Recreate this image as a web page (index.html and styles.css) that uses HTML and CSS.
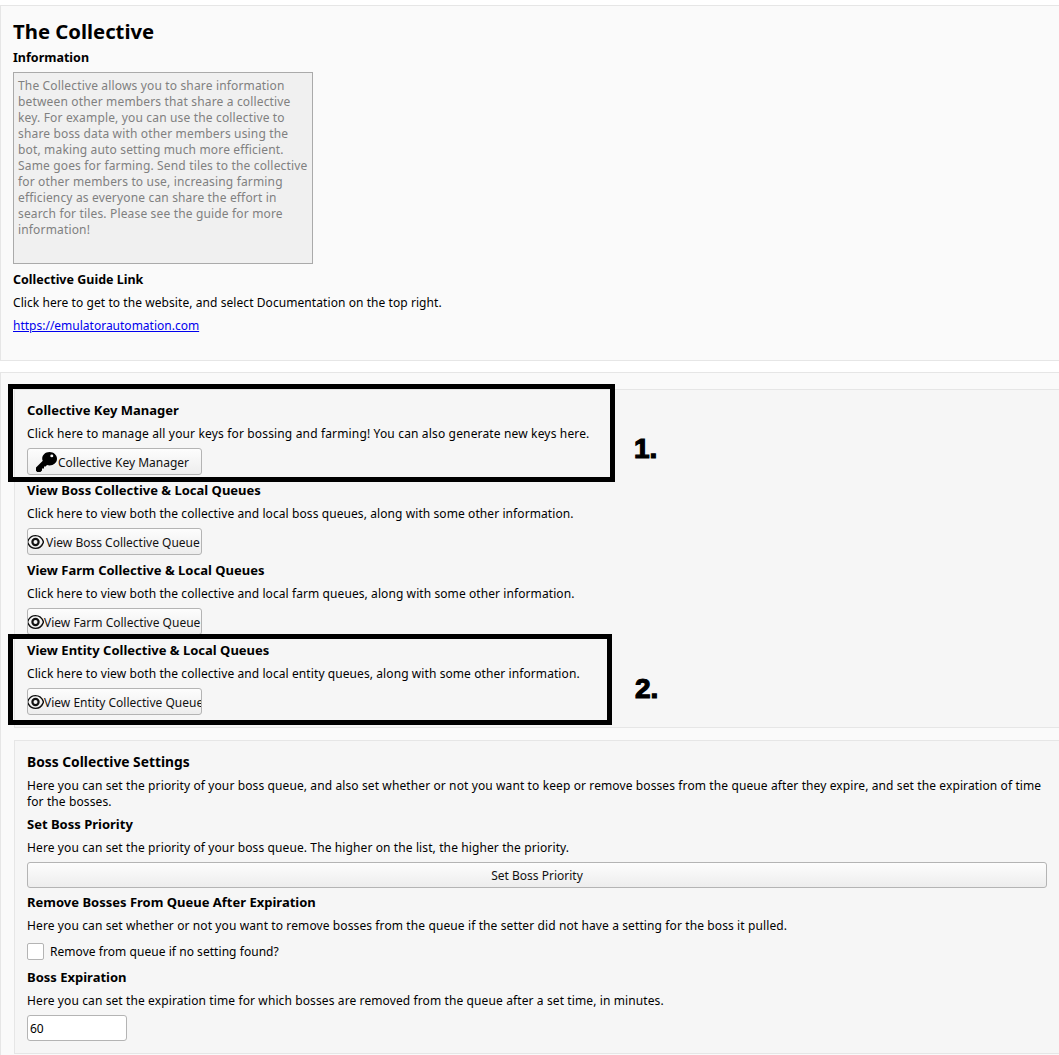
FILE: index.html
```html
<!DOCTYPE html>
<html lang="en">

<head>
    <meta charset="UTF-8">
    <title>The Collective</title>
    <link rel="stylesheet" href="styles.css">
</head>

<body>
<div class="page">
    <section class="panel intro">
        <h1>The Collective</h1>
        <h3>Information</h3>
        <textarea class="info" disabled>The Collective allows you to share information
between other members that share a collective
key. For example, you can use the collective to
share boss data with other members using the
bot, making auto setting much more efficient.
Same goes for farming. Send tiles to the collective
for other members to use, increasing farming
efficiency as everyone can share the effort in
search for tiles. Please see the guide for more
information!</textarea>
        <h3>Collective Guide Link</h3>
        <p>Click here to get to the website, and select Documentation on the top right.</p>
        <a class="link" href="#">https://emulatorautomation.com</a>
    </section>

    <section class="panel outer">
        <div class="inner queues">
            <div class="block key-block">
                <h3>Collective Key Manager</h3>
                <p>Click here to manage all your keys for bossing and farming! You can also generate new keys here.</p>
                <button class="btn key-btn">
                    <svg class="key" viewBox="0 0 21 20"><path d="M13.500 0C17.600 0 21 2.900 21 6.700 21 10.500 17.600 13.400 13.500 13.400 12.600 13.400 11.800 13.300 11 13L9.600 14.400H8V16.400H6V18.400L4.400 20H1.200L0 18.800V15.600L6.800 8.800C6.400 8.200 6.200 7.500 6.200 6.700 6.200 2.900 9.400 0 13.500 0ZM15.800 2.600A1.500 1.300 0 1 0 15.800 5.200 1.500 1.300 0 1 0 15.800 2.600Z" fill-rule="evenodd"/></svg>
                    Collective Key Manager
                </button>
            </div>
            <div class="block">
                <h3>View Boss Collective &amp; Local Queues</h3>
                <p>Click here to view both the collective and local boss queues, along with some other information.</p>
                <button class="btn eye-btn wide-eye">
                    <svg class="eye" viewBox="0 0 17 16"><path d="M.5 8C3.500 -.5 13.500 -.5 16.500 8 13.500 16.500 3.500 16.500 .5 8Z" fill="none" stroke="#111" stroke-width="1.400"/><circle cx="8.500" cy="8" r="3.100" fill="none" stroke="#111" stroke-width="2.200"/></svg>View Boss Collective Queue
                </button>
            </div>
            <div class="block">
                <h3>View Farm Collective &amp; Local Queues</h3>
                <p>Click here to view both the collective and local farm queues, along with some other information.</p>
                <button class="btn eye-btn">
                    <svg class="eye" viewBox="0 0 17 16"><path d="M.5 8C3.500 -.5 13.500 -.5 16.500 8 13.500 16.500 3.500 16.500 .5 8Z" fill="none" stroke="#111" stroke-width="1.400"/><circle cx="8.500" cy="8" r="3.100" fill="none" stroke="#111" stroke-width="2.200"/></svg>View Farm Collective Queue
                </button>
            </div>
            <div class="block">
                <h3>View Entity Collective &amp; Local Queues</h3>
                <p>Click here to view both the collective and local entity queues, along with some other information.</p>
                <button class="btn eye-btn">
                    <svg class="eye" viewBox="0 0 17 16"><path d="M.5 8C3.500 -.5 13.500 -.5 16.500 8 13.500 16.500 3.500 16.500 .5 8Z" fill="none" stroke="#111" stroke-width="1.400"/><circle cx="8.500" cy="8" r="3.100" fill="none" stroke="#111" stroke-width="2.200"/></svg>View Entity Collective Queue
                </button>
            </div>
        </div>

        <div class="inner settings">
            <h2>Boss Collective Settings</h2>
            <p>Here you can set the priority of your boss queue, and also set whether or not you want to keep or remove bosses from the queue after they expire, and set the expiration of time<br>for the bosses.</p>
            <h3>Set Boss Priority</h3>
            <p>Here you can set the priority of your boss queue. The higher on the list, the higher the priority.</p>
            <button class="btn full">Set Boss Priority</button>
            <h3>Remove Bosses From Queue After Expiration</h3>
            <p>Here you can set whether or not you want to remove bosses from the queue if the setter did not have a setting for the boss it pulled.</p>
            <label class="check"><span class="box"></span>Remove from queue if no setting found?</label>
            <h3>Boss Expiration</h3>
            <p>Here you can set the expiration time for which bosses are removed from the queue after a set time, in minutes.</p>
            <input class="num" type="text" value="60">
        </div>
    </section>
</div>

<!-- hand drawn marks over the screenshot -->
<div class="mark mark-one"></div>
<div class="mark mark-two"></div>
<div class="mark-num num-one">1.</div>
<div class="mark-num num-two">2.</div>
</body>

</html>
```

FILE: styles.css
```css
* {
    margin: 0;
    padding: 0;
    box-sizing: border-box;
}

html {
    overflow: hidden;
}

body {
    position: relative;
    height: 1055px;
    overflow: hidden;
    background: #fff;
    color: #000;
    font-family: "Noto Sans", "DejaVu Sans", sans-serif;
    font-size: 12px;
    line-height: 16px;
}

.page {
    padding-top: 5px;
}

h1 {
    font-size: 20.300px;
    line-height: 26px;
    margin-bottom: 6px;
}

h2 {
    font-size: 13.800px;
    line-height: 16px;
    margin-bottom: 7px;
}

h3 {
    font-size: 13px;
    line-height: 16px;
    margin-bottom: 7px;
}

p {
    padding-top: 1px;
    margin-bottom: 6px;
    letter-spacing: 0.110px;
}

.panel {
    background: #fafafa;
    border: solid #e6e6e6;
    border-width: 1px 0 1px 1px;
}

.intro {
    height: 356px;
    padding: 12px 0 0 12px;
    margin-bottom: 11px;
}

.intro h3 {
    font-size: 12.500px;
    margin-bottom: 6px;
}

.intro p {
    letter-spacing: 0.070px;
}

.info {
    display: block;
    width: 300px;
    height: 192px;
    margin-bottom: 8px;
    padding: 5px 4px;
    background: #f0f0f0;
    border: 1px solid #aaa;
    color: #808080;
    font: inherit;
    letter-spacing: 0.160px;
    white-space: pre;
    overflow: hidden;
    resize: none;
}

.link {
    position: relative;
    top: 1px;
    color: #0000ee;
}

.outer {
    padding: 16px 0 0 13px;
    height: 700px;
}

.inner {
    background: #f6f6f6;
    border: 1px solid #e6e6e6;
    border-right: none;
}

.queues {
    padding: 12px 12px 5px 12px;
    margin-bottom: 12px;
}

.settings {
    padding: 13px 12px 12px 12px;
}

.block {
    height: 80px;
}

.block p {
    letter-spacing: 0.085px;
}

.key-block p {
    letter-spacing: 0.155px;
}

.btn {
    display: block;
    height: 27px;
    padding-top: 2px;
    background: linear-gradient(#fdfdfd, #ededed);
    border: 1px solid #b4b4b4;
    border-radius: 3px;
    color: #111;
    font: inherit;
    text-align: left;
    white-space: nowrap;
    overflow: hidden;
}

.key-btn,
.eye-btn {
    display: flex;
    align-items: center;
    width: 175px;
}

.key-btn {
    padding-left: 8px;
}

.key {
    width: 21px;
    height: 20px;
    margin-right: 1px;
    margin-top: -2px;
    flex: none;
    fill: #000;
}

.eye {
    width: 17px;
    height: 16px;
    flex: none;
    margin-top: -2px;
    margin-left: -1px;
}

.wide-eye .eye {
    margin-right: 2px;
}

.full {
    width: 100%;
    height: 26px;
    margin-bottom: 6px;
    text-align: center;
}

.check {
    display: flex;
    align-items: center;
    height: 17px;
    margin: 9px 0;
    letter-spacing: 0.050px;
}

.box {
    width: 17px;
    height: 17px;
    margin-right: 6px;
    background: #fff;
    border: 1px solid #b4b4b4;
    border-radius: 2px;
}

.num {
    display: block;
    width: 100px;
    height: 26px;
    padding: 0 2px;
    background: #fff;
    border: 1px solid #b4b4b4;
    border-radius: 3px;
    color: #000;
    font: inherit;
}

.mark {
    position: absolute;
    border: 5px solid #000;
}

.mark-one {
    left: 8px;
    top: 384px;
    width: 607px;
    height: 98px;
}

.mark-two {
    left: 8px;
    top: 634px;
    width: 604px;
    height: 91px;
}

.mark-num {
    position: absolute;
    font-family: "Liberation Sans", sans-serif;
    font-weight: bold;
    font-size: 28px;
    line-height: 30px;
    color: #000;
    -webkit-text-stroke: 1.200px #000;
}

.num-one {
    left: 634px;
    top: 434px;
}

.num-two {
    left: 635px;
    top: 674px;
}
```
